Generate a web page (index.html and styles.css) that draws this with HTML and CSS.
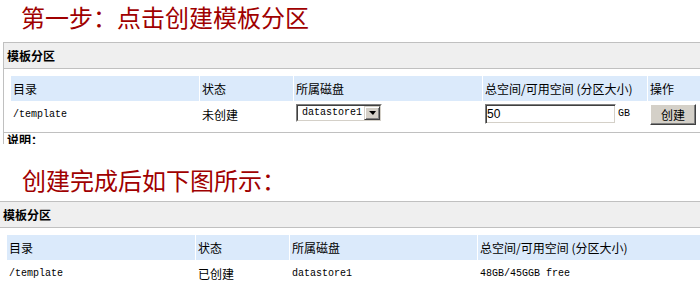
FILE: index.html
```html
<!DOCTYPE html>
<html lang="zh-CN">
<head>
    <meta charset="UTF-8">
    <meta name="viewport" content="width=device-width, initial-scale=1.0">
    <title>模板分区</title>
    <link rel="stylesheet" href="styles.css">
</head>
<body>
    <!-- step one: partition not created yet -->
    <div class="shot shot-first">
        <h1 class="step">第一步：点击创建模板分区</h1>
        <div class="panel">
            <div class="panel-head">模板分区</div>
            <div class="panel-body panel-body-ruled">
                <table class="grid grid-first">
                    <tr>
                        <th class="col-dir">目录</th>
                        <th class="col-state">状态</th>
                        <th class="col-disk">所属磁盘</th>
                        <th class="col-size">总空间/可用空间 (分区大小)</th>
                        <th class="col-op">操作</th>
                    </tr>
                    <tr>
                        <td class="mono">/template</td>
                        <td>未创建</td>
                        <td>
                            <div class="select">
                                <div class="select-inner">
                                    <span class="select-value mono">datastore1</span>
                                    <span class="select-btn"></span>
                                </div>
                            </div>
                        </td>
                        <td>
                            <div class="field">
                                <input class="textbox" type="text" value="50">
                                <span class="unit mono">GB</span>
                            </div>
                        </td>
                        <td><button class="btn" type="button">创建</button></td>
                    </tr>
                </table>
            </div>
            <div class="note">说明：</div>
        </div>
    </div>

    <!-- after creation -->
    <div class="shot shot-second">
        <h1 class="step">创建完成后如下图所示：</h1>
        <div class="panel panel-flush">
            <div class="panel-head">模板分区</div>
            <div class="panel-body">
                <table class="grid grid-second">
                    <tr>
                        <th class="col-dir">目录</th>
                        <th class="col-state">状态</th>
                        <th class="col-disk2">所属磁盘</th>
                        <th class="col-size2">总空间/可用空间 (分区大小)</th>
                    </tr>
                    <tr>
                        <td class="mono">/template</td>
                        <td>已创建</td>
                        <td class="mono">datastore1</td>
                        <td class="mono">48GB/45GGB free</td>
                    </tr>
                </table>
            </div>
        </div>
    </div>
</body>
</html>
```

FILE: styles.css
```css
body {
    margin: 0;
    font-family: "Noto Sans CJK SC", sans-serif;
    font-size: 12px;
    color: #000;
    background: #fff;
}
.shot {
    overflow: hidden;
}
.shot-first {
    height: 144px;
}
.shot-second {
    margin-top: 19px;
}
.step {
    margin: 0;
    height: 34px;
    line-height: 34px;
    padding-left: 21px;
    font-size: 24px;
    font-weight: normal;
    color: #a00000;
}
.shot-first .step {
    margin-bottom: 8px;
}
.shot-second .step {
    padding-left: 22px;
    margin-bottom: 4px;
}
.panel {
    margin-left: 3px;
    border-top: 1px solid #c0c0c0;
    border-left: 1px solid #c0c0c0;
}
.panel-flush {
    margin-left: -1px;
}
.panel-head {
    height: 25px;
    line-height: 25px;
    padding-left: 3px;
    background: #efefef;
    border-bottom: 1px solid #c0c0c0;
    font-weight: bold;
}
.panel-body {
    padding: 7px 0 0 6px;
}
.panel-body-ruled {
    border-bottom: 1px solid #c0c0c0;
}
.note {
    padding-left: 3px;
    line-height: 14px;
    font-weight: bold;
}
.mono {
    font-family: "Liberation Mono", monospace;
    font-size: 10px;
}
.grid {
    border-collapse: separate;
    border-spacing: 1px 0;
    table-layout: fixed;
}
.grid-first {
    width: 699px;
}
.grid-second {
    width: 713px;
}
.grid th,
.grid td {
    box-sizing: border-box;
    text-align: left;
    white-space: nowrap;
}
.grid th {
    height: 25px;
    line-height: 25px;
    padding: 0 2px;
    background: #dbeafb;
    font-weight: normal;
}
.grid td {
    padding: 3px 2px 7px;
    line-height: 21px;
    vertical-align: top;
}
.col-dir { width: 188px; }
.col-state { width: 93px; }
.col-disk { width: 188px; }
.col-size { width: 164px; }
.col-op { width: 60px; }
.col-disk2 { width: 187px; }
.col-size2 { width: 240px; }
.select {
    width: 86px;
    height: 18px;
    box-sizing: border-box;
    border: 1px solid;
    border-color: #808080 #fff #fff #808080;
    background: #fff;
}
.select-inner {
    display: flex;
    align-items: center;
    height: 100%;
    box-sizing: border-box;
    border: 1px solid;
    border-color: #404040 #d4d0c8 #d4d0c8 #404040;
}
.select-value {
    flex: 1;
    padding-left: 4px;
    line-height: 14px;
}
.select-btn {
    display: flex;
    align-items: center;
    justify-content: center;
    width: 16px;
    height: 14px;
    box-sizing: border-box;
    background: #d4d0c8;
    border: 1px solid;
    border-color: #d4d0c8 #404040 #404040 #d4d0c8;
    box-shadow: inset 1px 1px #fff, inset -1px -1px #808080;
}
.select-btn::after {
    content: "";
    border-top: 4px solid #000;
    border-left: 4px solid transparent;
    border-right: 3px solid transparent;
}
.field {
    display: flex;
    align-items: flex-start;
    gap: 2px;
}
.textbox {
    width: 131px;
    height: 20px;
    box-sizing: border-box;
    margin: 0;
    padding: 0 0 0 1px;
    border: 1px solid;
    border-color: #808080 #fff #fff #808080;
    box-shadow: inset 1px 1px #404040, inset -1px -1px #d4d0c8;
    font-family: "Liberation Sans", sans-serif;
    font-size: 12px;
    color: #000;
    outline: none;
}
.unit {
    line-height: 19px;
}
.btn {
    display: block;
    width: 46px;
    height: 21px;
    margin: 0;
    padding: 0;
    background: #d4d0c8;
    border: 1px solid;
    border-color: #fff #404040 #404040 #fff;
    box-shadow: inset -1px -1px #808080;
    font-family: "Noto Sans CJK SC", sans-serif;
    font-size: 12px;
    color: #000;
}
```
